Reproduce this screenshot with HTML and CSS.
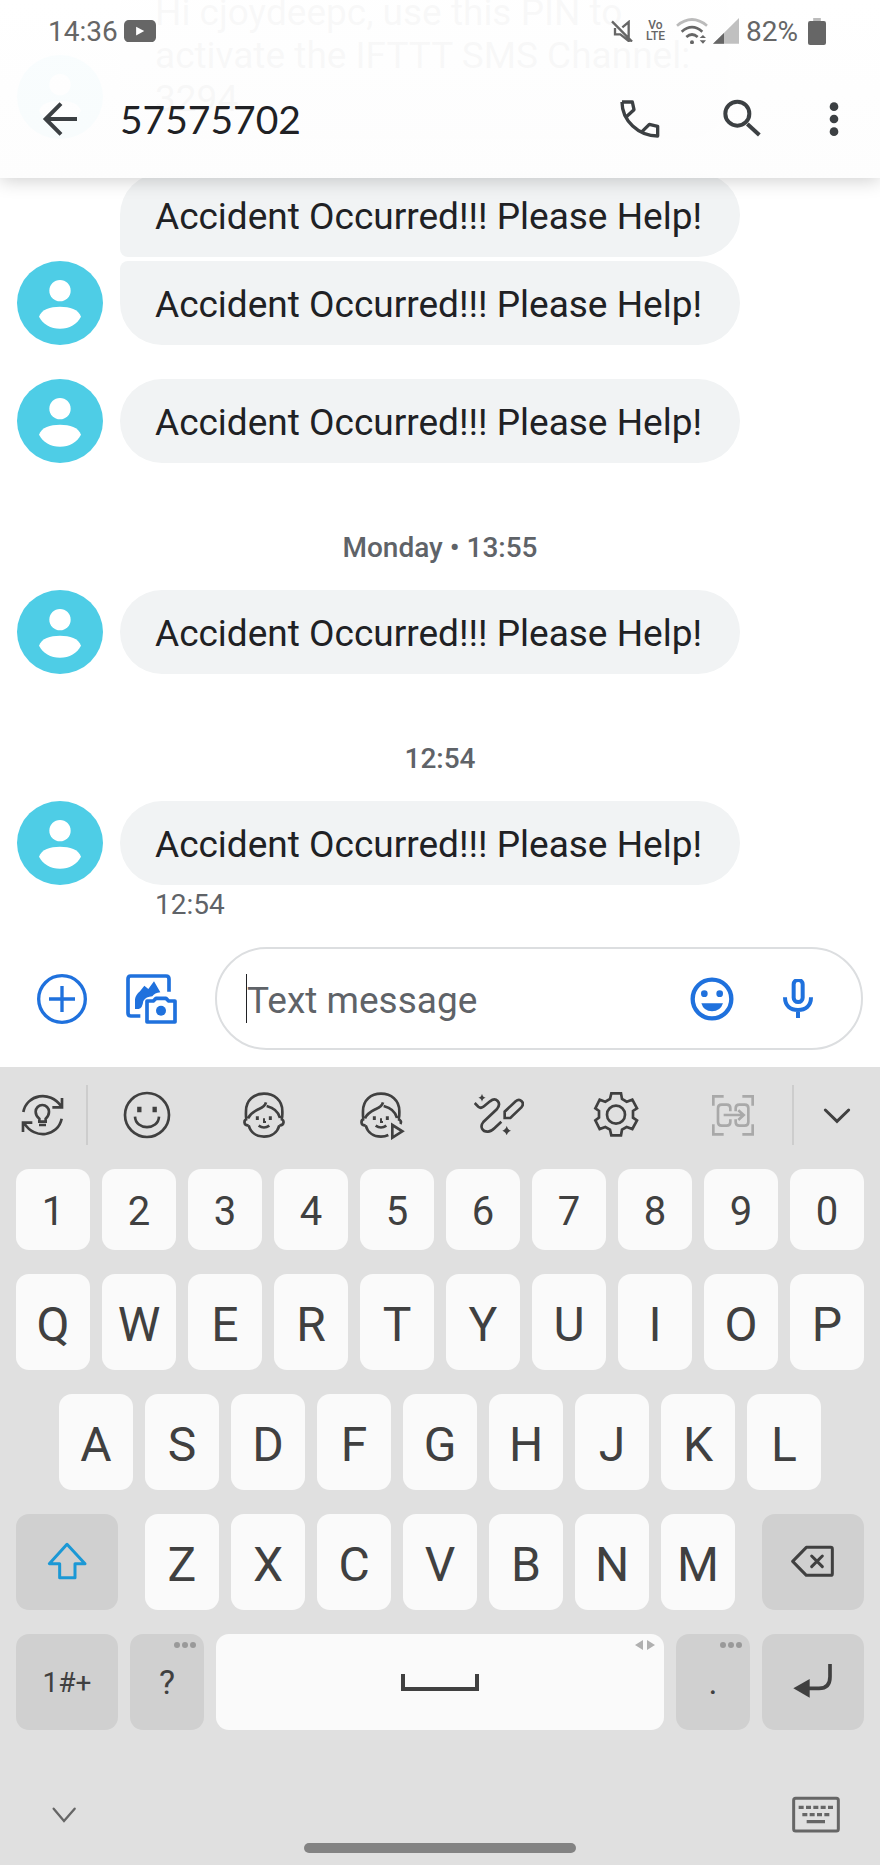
FILE: index.html
```html
<!DOCTYPE html>
<html lang="en">
<head>
<meta charset="utf-8">
<meta name="viewport" content="width=device-width, initial-scale=1">
<title>Messages</title>
<link rel="stylesheet" href="styles.css">
</head>
<body>
<svg class="defs" aria-hidden="true">
  <symbol id="person" viewBox="51 273 258 252">
    <circle cx="180" cy="362" r="32"/>
    <path d="M117 440C125 418 150 410 180 410C210 410 235 418 243 440C232 462 208 476 180 476C152 476 128 462 117 440Z"/>
  </symbol>
  <symbol id="kid" viewBox="727 95 135 145">
    <path d="M739 179C737 170 738 162 738 155C738 122 762 103 792 103C822 103 847 122 847 155C847 162 848 170 845 179M744 177C752 160 765 155 777 149C786 145 795 141 798 129M800 140C820 145 835 155 840 176M742 179C730 181 730 199 746 198"/>
    <path d="M772 171V182M811 171V182" stroke-width="9"/>
    <path d="M792 177V188H798" stroke-width="6"/>
    <path d="M776 199Q792 210 808 199"/>
  </symbol>
</svg>

<header class="top">
  <div class="status">
    <span>14:36</span>
    <svg class="yt" viewBox="370 57 95 66"><rect x="370" y="57" width="95" height="66" rx="14" fill="#666"/><path d="M406 77L430 90L406 103Z" fill="#fff"/></svg>
    <span class="grow"></span>
    <svg class="mute" viewBox="513 56 66 68" fill="none" stroke="#666" stroke-width="7"><path d="M525 80V99H541L566 119V62L547 78M516 60L576 121"/></svg>
    <span class="volte">Vo<br>LTE</span>
    <svg class="wifi" viewBox="709 50 96 80" fill="none" stroke="#666" stroke-width="8"><path stroke="#bbb" d="M712 73Q757 36 802 73"/><path d="M726 91Q757 64 788 91M740 107Q757 92 774 107"/><g fill="#666" stroke="none"><circle cx="757" cy="123" r="6"/><path d="M780 110H799L790 101ZM780 117H799L790 127Z"/></g></svg>
    <svg class="signal" viewBox="822 52 78 77"><path fill="#c0c0c0" d="M822 129L900 52V129Z"/><path fill="#666" d="M822 129L855 97V129Z"/></svg>
    <span>82%</span>
    <svg class="battery" viewBox="1105 51 52 78"><rect x="1120" y="51" width="22" height="12" fill="#bbb"/><rect x="1105" y="60" width="52" height="69" rx="6" fill="#666"/></svg>
  </div>
  <div class="bar">
    <button class="back" aria-label="Back"><svg viewBox="120 300 120 114" fill="none" stroke="#3c4043" stroke-width="12"><path d="M231 357H138M183 311L137 357L183 403"/></svg></button>
    <h1>57575702</h1>
    <div class="actions">
      <button class="act" aria-label="Call"><svg viewBox="527 283 144 144" fill="none" stroke="#3c4043" stroke-width="10" stroke-linejoin="round"><path d="M545 304C545 360 595 406 652 406V377L627 371L605 393M545 304H576L581 327L558 348"/></svg></button>
      <button class="act" aria-label="Search"><svg viewBox="834 283 144 144" fill="none" stroke="#3c4043" stroke-width="12"><circle cx="892" cy="339" r="36"/><path d="M922 370L958 403"/></svg></button>
      <button class="act more" aria-label="More options"><svg viewBox="1137 285 84 144" fill="#3c4043"><circle cx="1179" cy="320" r="13"/><circle cx="1179" cy="357" r="13"/><circle cx="1179" cy="395" r="13"/></svg></button>
    </div>
  </div>
</header>

<main class="thread">
  <div class="msg"><span class="avatar"><svg><use href="#person"/></svg></span><p class="bubble">Hi cjoydeepc, use this PIN to<br>activate the IFTTT SMS Channel:<br>3294</p></div>
  <div class="msg spaced"><span class="avatar none"></span><p class="bubble first">Accident Occurred!!! Please Help!</p></div>
  <div class="msg joined"><span class="avatar"><svg><use href="#person"/></svg></span><p class="bubble last">Accident Occurred!!! Please Help!</p></div>
  <div class="msg spaced"><span class="avatar"><svg><use href="#person"/></svg></span><p class="bubble">Accident Occurred!!! Please Help!</p></div>
  <div class="date">Monday • 13:55</div>
  <div class="msg"><span class="avatar"><svg><use href="#person"/></svg></span><p class="bubble">Accident Occurred!!! Please Help!</p></div>
  <div class="date">12:54</div>
  <div class="msg"><span class="avatar"><svg><use href="#person"/></svg></span><p class="bubble">Accident Occurred!!! Please Help!</p></div>
  <div class="time">12:54</div>
</main>

<form class="composer">
  <button type="button" class="plus" aria-label="Add"><svg viewBox="111 586 150 150" fill="none" stroke="#1f71dd" stroke-width="10"><circle cx="186" cy="661" r="70"/><path d="M147 661H225M186 622V700"/></svg></button>
  <button type="button" class="gallery" aria-label="Gallery"><svg viewBox="378 586 153 150" fill="none" stroke="#1f71dd" stroke-width="11" stroke-linejoin="round"><path d="M421 712H392Q384 712 384 703V601Q384 592 392 592H498Q507 592 507 601V639"/><path fill="#1f71dd" stroke="none" d="M405 691V662Q407 648 420 638L433 621L445 631L462 608L481 641Q464 643 457 653Q438 654 430 667Q427 690 416 691Z"/><path d="M441 667H460L468 659H498L506 667H525V730H441Z"/><circle cx="483" cy="696" r="15" fill="#1f71dd" stroke="none"/></svg></button>
  <div class="field">
    <input type="text" placeholder="Text message" aria-label="Text message">
    <button type="button" class="emoji" aria-label="Emoji"><svg viewBox="749 591 132 132" fill="#1f71dd"><circle cx="815" cy="657" r="58" fill="none" stroke="#1f71dd" stroke-width="13"/><circle cx="792" cy="641" r="10"/><circle cx="838" cy="641" r="10"/><path d="M783 670H848Q840 694 815 694Q790 694 783 670Z"/></svg></button>
    <button type="button" class="mic" aria-label="Voice"><svg viewBox="1029 591 90 120" fill="none" stroke="#1f71dd" stroke-width="12"><rect x="1061" y="594" width="27" height="66" rx="13"/><path d="M1035 646C1035 672 1052 684 1074 684C1096 684 1113 672 1113 646M1074 684V708"/></svg></button>
  </div>
</form>

<section class="keyboard" aria-label="Keyboard">
  <div class="tools">
    <button class="tool side" aria-label="Suggestions"><svg viewBox="54 90 150 150"><path d="M70 156C80 103 150 90 183 138M186 114V142H157M185 176C174 230 104 240 73 190M69 216V188H97M118 185V176C108 168 107 160 107 155A20 20 0 0 1 147 155C147 160 146 168 137 176V185ZM117 195H138"/></svg></button>
    <button class="tool" aria-label="Emoji"><svg viewBox="365 92 150 150"><circle cx="440" cy="167" r="66"/><path d="M404 172C406 214 474 214 476 172"/><path stroke-width="13" d="M417 142V159M463 142V159"/></svg></button>
    <button class="tool" aria-label="Stickers"><svg viewBox="717 92 150 150"><use href="#kid" x="727" y="95" width="135" height="145"/><path d="M842 179C855 181 853 199 838 198M746 198C752 220 770 232 792 232C814 232 832 220 838 198"/></svg></button>
    <button class="tool" aria-label="Animated stickers"><svg viewBox="717 92 150 150"><use href="#kid" x="727" y="95" width="135" height="145"/><path d="M843 179Q856 184 850 194M746 198C752 220 770 232 792 232Q804 232 814 227M826 197L856 216L826 235Z"/></svg></button>
    <button class="tool" aria-label="Drawing"><svg viewBox="104 92 150 150"><path d="M106 131L117 142Q125 149 134 141L152 126C170 112 188 130 173 149L132 188C120 203 130 218 146 217C155 217 160 212 166 206L186 187M196 176V157L229 126C242 115 258 130 246 144L213 176Z"/><path fill="#404040" stroke="none" d="M128 103Q130 113 139 115Q130 117 128 127Q126 117 117 115Q126 113 128 103ZM202 200Q205 211 215 214Q205 217 202 228Q199 217 189 214Q199 211 202 200Z"/></svg></button>
    <button class="tool" aria-label="Settings"><svg viewBox="453 92 150 150"><path d="M514 102H543L546 119L560 127L577 121L591 147L579 155V175L591 183L577 209L560 203L546 211L543 228H514L510 211L496 203L479 209L466 183L477 175V155L466 147L479 121L496 127L510 119Z"/><circle cx="528" cy="166" r="27"/></svg></button>
    <button class="tool" aria-label="Extract text"><svg class="dim" viewBox="805 92 150 150"><path d="M821 139V111H852M908 111H939V139M821 195V225H852M908 225H939V195M872 156V147Q872 136 861 136H846Q835 136 835 147V188Q835 199 846 199H861Q872 199 872 188V180M888 156V147Q888 136 899 136H915Q926 136 926 147V188Q926 199 915 199H899Q888 199 888 188V180M852 167H910M896 153L912 167L896 182"/></svg></button>
    <button class="tool side" aria-label="Collapse toolbar"><svg viewBox="1118 90 150 150"><path stroke-width="9" stroke-linecap="round" d="M1158 150L1193 184L1228 150"/></svg></button>
  </div>
  <div class="keys">
    <div class="row digits"><button>1</button><button>2</button><button>3</button><button>4</button><button>5</button><button>6</button><button>7</button><button>8</button><button>9</button><button>0</button></div>
    <div class="row"><button>Q</button><button>W</button><button>E</button><button>R</button><button>T</button><button>Y</button><button>U</button><button>I</button><button>O</button><button>P</button></div>
    <div class="row home"><button>A</button><button>S</button><button>D</button><button>F</button><button>G</button><button>H</button><button>J</button><button>K</button><button>L</button></div>
    <div class="row shifted">
      <button class="fn" aria-label="Shift"><svg class="k40" viewBox="140 486 120 120" fill="none" stroke="#1b98d5" stroke-width="9" stroke-linejoin="round"><path d="M200 493L147 551H178V593H224V551H254Z"/></svg></button>
      <div class="mid"><button>Z</button><button>X</button><button>C</button><button>V</button><button>B</button><button>N</button><button>M</button></div>
      <button class="fn" aria-label="Backspace"><svg class="k44" viewBox="1051 481 132 132" fill="none" stroke="#404040" stroke-width="9" stroke-linejoin="round" stroke-linecap="round"><path d="M1097 503H1170Q1175 503 1175 508V582Q1175 587 1170 587H1097L1056 545Z"/><path d="M1113 529L1145 561M1145 529L1113 561"/></svg></button>
    </div>
    <div class="row bottom">
      <button class="fn sym">1#+</button>
      <button class="fn punct">?<svg class="hint" viewBox="0 0 24 10"><circle cx="4" cy="5" r="3"/><circle cx="12" cy="5" r="3"/><circle cx="20" cy="5" r="3"/></svg></button>
      <button class="space" aria-label="Space"><span class="spacebar"></span><svg class="hint light" viewBox="0 0 24 10"><path d="M2 5L10 0V10ZM22 5L14 0V10Z"/></svg></button>
      <button class="fn punct">.<svg class="hint" viewBox="0 0 24 10"><circle cx="4" cy="5" r="3"/><circle cx="12" cy="5" r="3"/><circle cx="20" cy="5" r="3"/></svg></button>
      <button class="fn" aria-label="Enter"><svg class="k40" viewBox="1060 846 120 120" fill="none" stroke="#404040" stroke-width="11"><path d="M1105 925H1138Q1171 925 1171 890V852"/><path fill="#404040" stroke="none" d="M1061 925L1110 897V953Z"/></svg></button>
    </div>
  </div>
  <nav class="nav">
    <button aria-label="Hide keyboard"><svg viewBox="121 1230 144 150" fill="none" stroke="#666" stroke-width="7" stroke-linecap="round"><path d="M162 1286L193 1323L225 1286"/></svg></button>
    <button aria-label="Choose keyboard"><svg viewBox="1055 1230 144 150" fill="#666"><rect x="1060" y="1255" width="134" height="98" rx="6" fill="none" stroke="#666" stroke-width="9"/><path d="M1075 1277h15v10h-15zM1097 1277h15v10h-15zM1119 1277h15v10h-15zM1141 1277h15v10h-15zM1163 1277h15v10h-15zM1086 1299h15v10h-15zM1108 1299h15v10h-15zM1130 1299h15v10h-15zM1152 1299h15v10h-15zM1099 1320h55v10h-55z"/></svg></button>
  </nav>
  <div class="handle"></div>
</section>
</body>
</html>
```
FILE: styles.css
```css
* { box-sizing: border-box; }

body {
  margin: 0;
  height: 100vh;
  display: flex;
  flex-direction: column;
  position: relative;
  overflow: hidden;
  background: #fff;
  color: #202124;
  font-family: Roboto, "Liberation Sans", sans-serif;
}

button {
  appearance: none;
  border: 0;
  padding: 0;
  margin: 0;
  background: none;
  color: inherit;
  font: inherit;
  flex: none;
}

svg { display: block; width: 100%; }
.defs { position: absolute; width: 0; height: 0; }
.grow { flex: 1; }

/* translucent app bar floating over the scrolled thread */
.top {
  position: absolute;
  top: 0;
  left: 0;
  right: 0;
  z-index: 1;
  background: linear-gradient(rgba(255, 255, 255, 0.97), rgba(253, 253, 253, 0.97));
  box-shadow: 0 2px 18px rgba(0, 0, 0, 0.2);
}

.status {
  display: flex;
  align-items: center;
  height: 62px;
  padding: 0 54px 0 48px;
  color: #666;
  font-size: 28px;
}
.status svg { flex: none; }
.yt { width: 32px; margin-left: 6px; }
.mute { width: 22px; }
.volte { margin: 0 11px 0 13px; font-size: 12px; line-height: 11px; font-weight: 500; text-align: center; }
.wifi { width: 32px; }
.signal { width: 26px; margin: 0 7px 0 5px; }
.battery { width: 18px; margin-left: 10px; }

.bar {
  display: flex;
  align-items: center;
  height: 116px;
  padding: 0 32px 2px 40px;
}
.back { width: 40px; }
h1 {
  flex: 1;
  margin: 0 0 0 40px;
  font: 400 39px Lato, Roboto, sans-serif;
}
.actions { display: flex; gap: 54px; }
.act { width: 48px; }
.act.more { width: 28px; }

.thread {
  flex: 1;
  min-height: 0;
  overflow: hidden;
  display: flex;
  flex-direction: column;
  justify-content: flex-end;
  padding: 0 17px;
}
.msg { display: flex; align-items: flex-end; gap: 17px; flex: none; }
.spaced { margin-top: 34px; }
.joined { margin-top: 4px; }
.avatar {
  flex: none;
  width: 86px;
  height: 84px;
  border-radius: 50%;
  background: #4ecde6;
  fill: #fff;
}
.avatar svg { height: 100%; }
.avatar.none { background: none; }
.bubble {
  margin: 0;
  padding: 22px 38px 19px 35px;
  border-radius: 42px;
  background: #f1f3f4;
  font-size: 37px;
  line-height: 43px;
}
.bubble.first { border-bottom-left-radius: 8px; }
.bubble.last { border-top-left-radius: 8px; }
.date {
  flex: none;
  margin: 68px 0 26px;
  color: #5f6368;
  font-size: 28px;
  line-height: 33px;
  font-weight: 500;
  text-align: center;
}
.time {
  flex: none;
  margin: 3px 0 0 138px;
  color: #5f6368;
  font-size: 28px;
  line-height: 33px;
}

.composer {
  flex: none;
  display: flex;
  align-items: center;
  padding: 26px 17px 17px 37px;
}
.plus { width: 50px; }
.gallery { width: 51px; margin: 0 38px 0 39px; }
.field {
  flex: 1;
  min-width: 0;
  height: 103px;
  display: flex;
  align-items: center;
  padding: 0 48px 0 29px;
  border: 2px solid #dcdee0;
  border-radius: 52px;
}
.field input {
  flex: 1;
  min-width: 0;
  height: 49px;
  padding: 3px 0 0;
  border: 0;
  border-left: 1px solid #202124;
  outline: 0;
  background: none;
  color: #202124;
  font: 37px Roboto, sans-serif;
}
.field input::placeholder { color: #5f6368; opacity: 1; }
.emoji { width: 44px; margin: 0 49px 0 16px; }
.mic { width: 30px; }

.keyboard {
  flex: none;
  padding-bottom: 12px;
  background: #e0e0e0;
  color: #404040;
}
.tools { display: flex; align-items: center; height: 96px; }
.tool { flex: 1; display: flex; justify-content: center; align-items: center; height: 60px; }
.tool.side { flex: none; width: 88px; }
.tool.side:first-child { border-right: 2px solid #cdcdcd; }
.tool.side:last-child { border-left: 2px solid #cdcdcd; }
.tool svg { width: 50px; height: 50px; fill: none; stroke: #404040; stroke-width: 8; }
.tool svg.dim { stroke: #a9a9a9; }

.keys { display: flex; flex-direction: column; gap: 24px; padding: 6px 16px 0; }
.row, .mid { display: grid; grid-template-columns: repeat(10, 1fr); gap: 12px; }
.row.home { grid-template-columns: repeat(9, 1fr); padding: 0 43px; }
.row.shifted { grid-template-columns: 102fr 590fr 102fr; gap: 27px; }
.mid { grid-template-columns: repeat(7, 1fr); }
.row.bottom { grid-template-columns: 102fr 74fr 448fr 74fr 102fr; }
.keys button {
  position: relative;
  display: flex;
  justify-content: center;
  align-items: center;
  min-width: 0;
  height: 96px;
  padding-top: 4px;
  border-radius: 13px;
  background: #fafafa;
  font-size: 48px;
}
.keys .digits button { height: 81px; font-size: 40px; }
.keys .fn { background: #d0d0d0; padding-top: 0; }
.keys .sym { font-size: 28px; }
.keys .punct { font-size: 34px; }
.keys .space { padding-top: 0; }
.k40 { width: 40px; }
.k44 { width: 44px; }
.spacebar {
  width: 78px;
  height: 17px;
  border: 4px solid #404040;
  border-top: 0;
}
.hint {
  position: absolute;
  top: 6px;
  right: 7px;
  width: 24px;
  fill: #999;
}
.hint.light { fill: #b0b0b0; }

.nav {
  display: flex;
  justify-content: space-between;
  padding: 60px 40px 0;
}
.nav button { width: 48px; }
.handle {
  width: 31%;
  height: 10px;
  margin: 3px auto 0;
  border-radius: 5px;
  background: #838383;
}
```
